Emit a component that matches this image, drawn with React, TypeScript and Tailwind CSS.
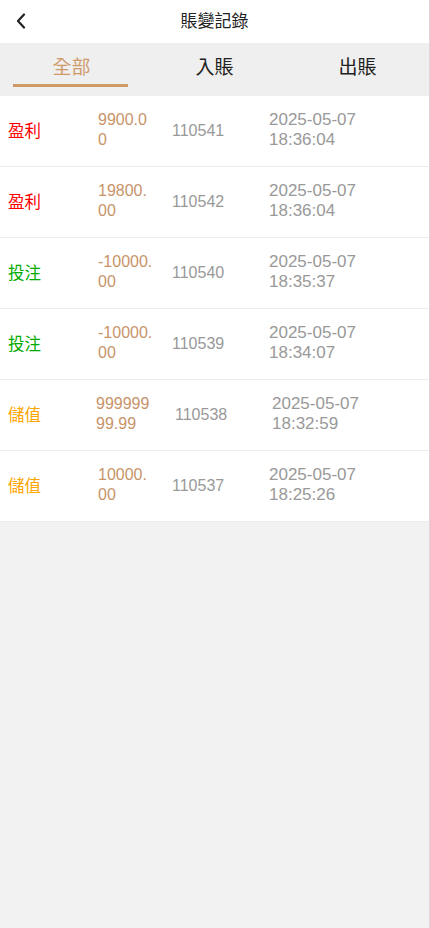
import React from "react";

interface Record {
  type: string;
  color: string;
  amount: string;
  id: string;
  date: string;
  time: string;
  wide?: boolean;
}

const records: Record[] = [
  { type: "盈利", color: "text-[#ff0000]", amount: "9900.00", id: "110541", date: "2025-05-07", time: "18:36:04" },
  { type: "盈利", color: "text-[#ff0000]", amount: "19800.00", id: "110542", date: "2025-05-07", time: "18:36:04" },
  { type: "投注", color: "text-[#00aa00]", amount: "-10000.00", id: "110540", date: "2025-05-07", time: "18:35:37" },
  { type: "投注", color: "text-[#00aa00]", amount: "-10000.00", id: "110539", date: "2025-05-07", time: "18:34:07" },
  { type: "儲值", color: "text-[#ffa500]", amount: "99999999.99", id: "110538", date: "2025-05-07", time: "18:32:59", wide: true },
  { type: "儲值", color: "text-[#ffa500]", amount: "10000.00", id: "110537", date: "2025-05-07", time: "18:25:26" },
];

const tabs = ["全部", "入賬", "出賬"];

export default function App() {
  return (
    <div
      className="w-[430px] min-h-[928px] bg-[#f2f2f2] border-r border-[#d9d9d9]"
      style={{ fontFamily: '"Liberation Sans", Arial, "Noto Sans CJK TC", sans-serif' }}
    >
      <div className="relative h-[43px] bg-white flex items-center justify-center">
        <svg
          className="absolute left-[14px] top-[13px]"
          width="14"
          height="16"
          viewBox="0 0 14 16"
          fill="none"
        >
          <path d="M10 1.5 L4 8 L10 14.5" stroke="#222" strokeWidth="2.2" strokeLinecap="round" strokeLinejoin="round" />
        </svg>
        <span className="text-[17px] text-[#222]">賬變記錄</span>
      </div>

      <div className="h-[53px] bg-[#efefef] flex">
        {tabs.map((t, i) => (
          <div key={t} className="flex-1 relative flex items-center justify-center">
            <span className={`text-[19px] ${i === 0 ? "text-[#cf9a6a]" : "text-[#222]"} -mt-[3px]`}>{t}</span>
            {i === 0 && (
              <div className="absolute left-[13px] right-[15px] top-[41px] h-[3px] bg-[#d09a66]" />
            )}
          </div>
        ))}
      </div>

      <div>
        {records.map((r, i) => (
          <div key={i} className="h-[71px] bg-white border-b border-[#ececec] flex items-center">
            <div className={`${r.wide ? "w-[96px]" : "w-[98px]"} pl-[8px] text-[16.5px] ${r.color}`}>{r.type}</div>
            <div className={`${r.wide ? "w-[79px]" : "w-[74px]"}`}>
              <div className="w-[56px] break-all text-[16px] leading-[20px] text-[#c8946a] -mt-[2px]">{r.amount}</div>
            </div>
            <div className="w-[97px] text-[16px] text-[#999999]">{r.id}</div>
            <div className="text-[17px] leading-[20px] text-[#999999] -mt-[2px]">
              <div>{r.date}</div>
              <div>{r.time}</div>
            </div>
          </div>
        ))}
      </div>
    </div>
  );
}
